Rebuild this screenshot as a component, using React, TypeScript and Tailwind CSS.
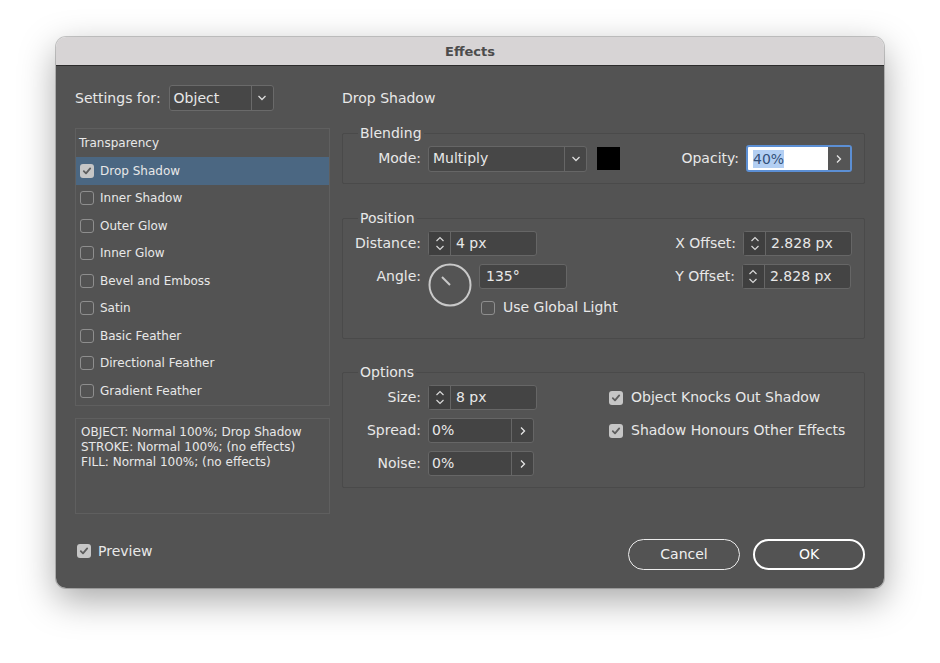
import React from 'react';

const Check: React.FC<{ checked?: boolean }> = ({ checked }) =>
  checked ? (
    <div className="w-[14px] h-[14px] rounded-[3px] bg-[#c6c6c6] flex items-center justify-center shrink-0">
      <svg width="10" height="10" viewBox="0 0 10 10">
        <path d="M1.8 5.2 L4 7.4 L8.2 2.4" fill="none" stroke="#5e5e5e" strokeWidth="1.8" strokeLinecap="round" strokeLinejoin="round" />
      </svg>
    </div>
  ) : (
    <div className="w-[14px] h-[14px] rounded-[3px] border border-[#8e8e8e] shrink-0" />
  );

const ChevronDown = () => (
  <svg width="10" height="6" viewBox="0 0 10 6">
    <path d="M1.5 1 L5 4.5 L8.5 1" fill="none" stroke="#dcdcdc" strokeWidth="1.3" />
  </svg>
);

const ChevronRight = () => (
  <svg width="6" height="10" viewBox="0 0 6 10">
    <path d="M1 1.5 L4.5 5 L1 8.5" fill="none" stroke="#e6e6e6" strokeWidth="1.3" />
  </svg>
);

const Spinner: React.FC<{ value: string }> = ({ value }) => (
  <div className="flex h-[25px] w-[109px] rounded-[3px] border border-[#666] bg-[#444]">
    <div className="w-[22px] border-r border-[#666] bg-[#3f3f3f] flex flex-col items-center justify-center gap-[3px]">
      <svg width="10" height="6" viewBox="0 0 10 6">
        <path d="M1.5 5 L5 1.5 L8.5 5" fill="none" stroke="#d8d8d8" strokeWidth="1.2" />
      </svg>
      <svg width="10" height="6" viewBox="0 0 10 6">
        <path d="M1.5 1 L5 4.5 L8.5 1" fill="none" stroke="#d8d8d8" strokeWidth="1.2" />
      </svg>
    </div>
    <div className="flex items-center pl-[5px] text-[14px]">{value}</div>
  </div>
);

const ArrowField: React.FC<{ value: string }> = ({ value }) => (
  <div className="flex h-[25px] w-[106px] rounded-[3px] border border-[#666] bg-[#444]">
    <div className="flex-1 flex items-center pl-[3px] text-[14px]">{value}</div>
    <div className="w-[22px] border-l border-[#666] flex items-center justify-center">
      <ChevronRight />
    </div>
  </div>
);

const Label: React.FC<{ children: React.ReactNode; w?: string }> = ({ children, w = 'w-[78px]' }) => (
  <div className={`${w} h-[25px] flex items-center justify-end text-[14px] mr-[7px] shrink-0`}>{children}</div>
);

const effects = [
  { name: 'Drop Shadow', checked: true },
  { name: 'Inner Shadow' },
  { name: 'Outer Glow' },
  { name: 'Inner Glow' },
  { name: 'Bevel and Emboss' },
  { name: 'Satin' },
  { name: 'Basic Feather' },
  { name: 'Directional Feather' },
  { name: 'Gradient Feather' },
];

const App: React.FC = () => {
  return (
    <div className="w-[940px] h-[663px] bg-white pl-[56px] pt-[37px] font-['DejaVu_Sans',sans-serif] text-[#e8e8e8]">
      <div className="w-[828px] h-[551px] rounded-[10px] overflow-hidden flex flex-col shadow-[0_12px_36px_rgba(0,0,0,0.35)] ring-1 ring-black/20">
        {/* Title bar */}
        <div className="h-[29px] pt-[1px] bg-[#d7d4d5] border-b border-[#2c2c2c] flex items-center justify-center text-[13px] font-bold text-[#4c4c4c]">
          Effects
        </div>

        {/* Body */}
        <div className="flex-1 bg-[#535353] px-[19px] pt-[19px] pb-[18px] flex flex-col">
          <div className="flex gap-[12px]">
            {/* Left column */}
            <div className="w-[255px] flex flex-col">
              <div className="flex items-center h-[26px]">
                <span className="text-[14px] mr-[8px]">Settings for:</span>
                <div className="flex h-[26px] w-[105px] rounded-[3px] border border-[#6a6a6a] bg-[#474747]">
                  <div className="flex-1 flex items-center pl-[4px] text-[14px]">Object</div>
                  <div className="w-[22px] border-l border-[#6a6a6a] flex items-center justify-center">
                    <ChevronDown />
                  </div>
                </div>
              </div>

              <div className="mt-[17px] border border-[#5f5f5f] text-[12px]">
                <div className="h-[28px] flex items-center pl-[3px]">Transparency</div>
                {effects.map((e) => (
                  <div
                    key={e.name}
                    className={`h-[27.5px] flex items-center pl-[4px] gap-[6px] ${e.checked ? 'bg-[#4b6782]' : ''}`}
                  >
                    <Check checked={e.checked} />
                    <span>{e.name}</span>
                  </div>
                ))}
              </div>

              <div className="mt-[12px] h-[96px] border border-[#5f5f5f] px-[5px] pt-[6px] text-[12px] leading-[15px]">
                <div>OBJECT: Normal 100%; Drop Shadow</div>
                <div>STROKE: Normal 100%; (no effects)</div>
                <div>FILL: Normal 100%; (no effects)</div>
              </div>
            </div>

            {/* Right column */}
            <div className="flex-1 flex flex-col">
              <div className="h-[26px] flex items-center text-[14px]">Drop Shadow</div>

              {/* Blending */}
              <fieldset className="mt-[14px] border border-[#4a4a4a] bg-[#545454] rounded-[2px] pt-[3px] pb-[11px]">
                <legend className="ml-[15px] px-[2px] text-[14px] leading-[17px]">Blending</legend>
                <div className="flex items-center">
                  <Label>Mode:</Label>
                  <div className="flex h-[26px] w-[159px] rounded-[3px] border border-[#666] bg-[#474747]">
                    <div className="flex-1 flex items-center pl-[4px] text-[14px]">Multiply</div>
                    <div className="w-[22px] border-l border-[#666] flex items-center justify-center">
                      <ChevronDown />
                    </div>
                  </div>
                  <div className="ml-[10px] w-[23px] h-[23px] bg-black" />
                  <div className="ml-auto flex items-center pr-[12px]">
                    <span className="text-[14px] mr-[7px]">Opacity:</span>
                    <div className="flex h-[27px] w-[106px] rounded-[3px] border-2 border-[#5c8fd4] bg-white">
                      <div className="flex-1 flex items-center pl-[5px]">
                        <span className="bg-[#b3cff3] text-[#34507a] text-[14px] leading-[18px]">40%</span>
                      </div>
                      <div className="w-[22px] bg-[#555] flex items-center justify-center">
                        <ChevronRight />
                      </div>
                    </div>
                  </div>
                </div>
              </fieldset>

              {/* Position */}
              <fieldset className="mt-[26px] border border-[#4a4a4a] bg-[#545454] rounded-[2px] pt-[4px] pb-[20px]">
                <legend className="ml-[15px] px-[2px] text-[14px] leading-[17px]">Position</legend>
                <div className="flex">
                  <div className="flex flex-col gap-[8px]">
                    <div className="flex items-center">
                      <Label>Distance:</Label>
                      <Spinner value="4 px" />
                    </div>
                    <div className="flex items-start">
                      <Label>Angle:</Label>
                      <svg width="44" height="44" viewBox="0 0 44 44" className="-mt-[1px]">
                        <circle cx="22" cy="22" r="20.5" fill="none" stroke="#c9c9c9" strokeWidth="2" />
                        <line x1="22" y1="22" x2="14" y2="14" stroke="#c9c9c9" strokeWidth="2" />
                      </svg>
                      <div className="ml-[7px] flex flex-col">
                        <div className="h-[25px] w-[88px] rounded-[3px] border border-[#666] bg-[#444] flex items-center pl-[6px] text-[14px]">
                          135°
                        </div>
                        <div className="mt-[8px] flex items-center gap-[8px] pl-[2px]">
                          <Check />
                          <span className="text-[14px]">Use Global Light</span>
                        </div>
                      </div>
                    </div>
                  </div>
                  <div className="ml-auto pr-[12px] flex flex-col gap-[8px]">
                    <div className="flex items-center">
                      <Label w="w-auto">X Offset:</Label>
                      <Spinner value="2.828 px" />
                    </div>
                    <div className="flex items-center">
                      <Label w="w-auto">Y Offset:</Label>
                      <Spinner value="2.828 px" />
                    </div>
                  </div>
                </div>
              </fieldset>

              {/* Options */}
              <fieldset className="mt-[25px] border border-[#4a4a4a] bg-[#545454] rounded-[2px] pt-[4px] pb-[11px]">
                <legend className="ml-[15px] px-[2px] text-[14px] leading-[17px]">Options</legend>
                <div className="flex">
                  <div className="flex flex-col gap-[8px]">
                    <div className="flex items-center">
                      <Label>Size:</Label>
                      <Spinner value="8 px" />
                    </div>
                    <div className="flex items-center">
                      <Label>Spread:</Label>
                      <ArrowField value="0%" />
                    </div>
                    <div className="flex items-center">
                      <Label>Noise:</Label>
                      <ArrowField value="0%" />
                    </div>
                  </div>
                  <div className="ml-[72px] flex flex-col gap-[8px] text-[14px]">
                    <div className="h-[25px] flex items-center gap-[8px]">
                      <Check checked />
                      <span>Object Knocks Out Shadow</span>
                    </div>
                    <div className="h-[25px] flex items-center gap-[8px]">
                      <Check checked />
                      <span>Shadow Honours Other Effects</span>
                    </div>
                  </div>
                </div>
              </fieldset>
            </div>
          </div>

          {/* Footer */}
          <div className="mt-auto flex items-start">
            <div className="mt-[4px] ml-[2px] h-[16px] flex items-center gap-[7px]">
              <Check checked />
              <span className="text-[14px]">Preview</span>
            </div>
            <div className="ml-auto flex gap-[13px]">
              <button className="w-[112px] h-[31px] rounded-full border-[1.5px] border-[#ececec] text-[14px] text-[#f0f0f0]">
                Cancel
              </button>
              <button className="w-[112px] h-[31px] rounded-full border-2 border-white text-[14px] text-white">
                OK
              </button>
            </div>
          </div>
        </div>
      </div>
    </div>
  );
};

export default App;
